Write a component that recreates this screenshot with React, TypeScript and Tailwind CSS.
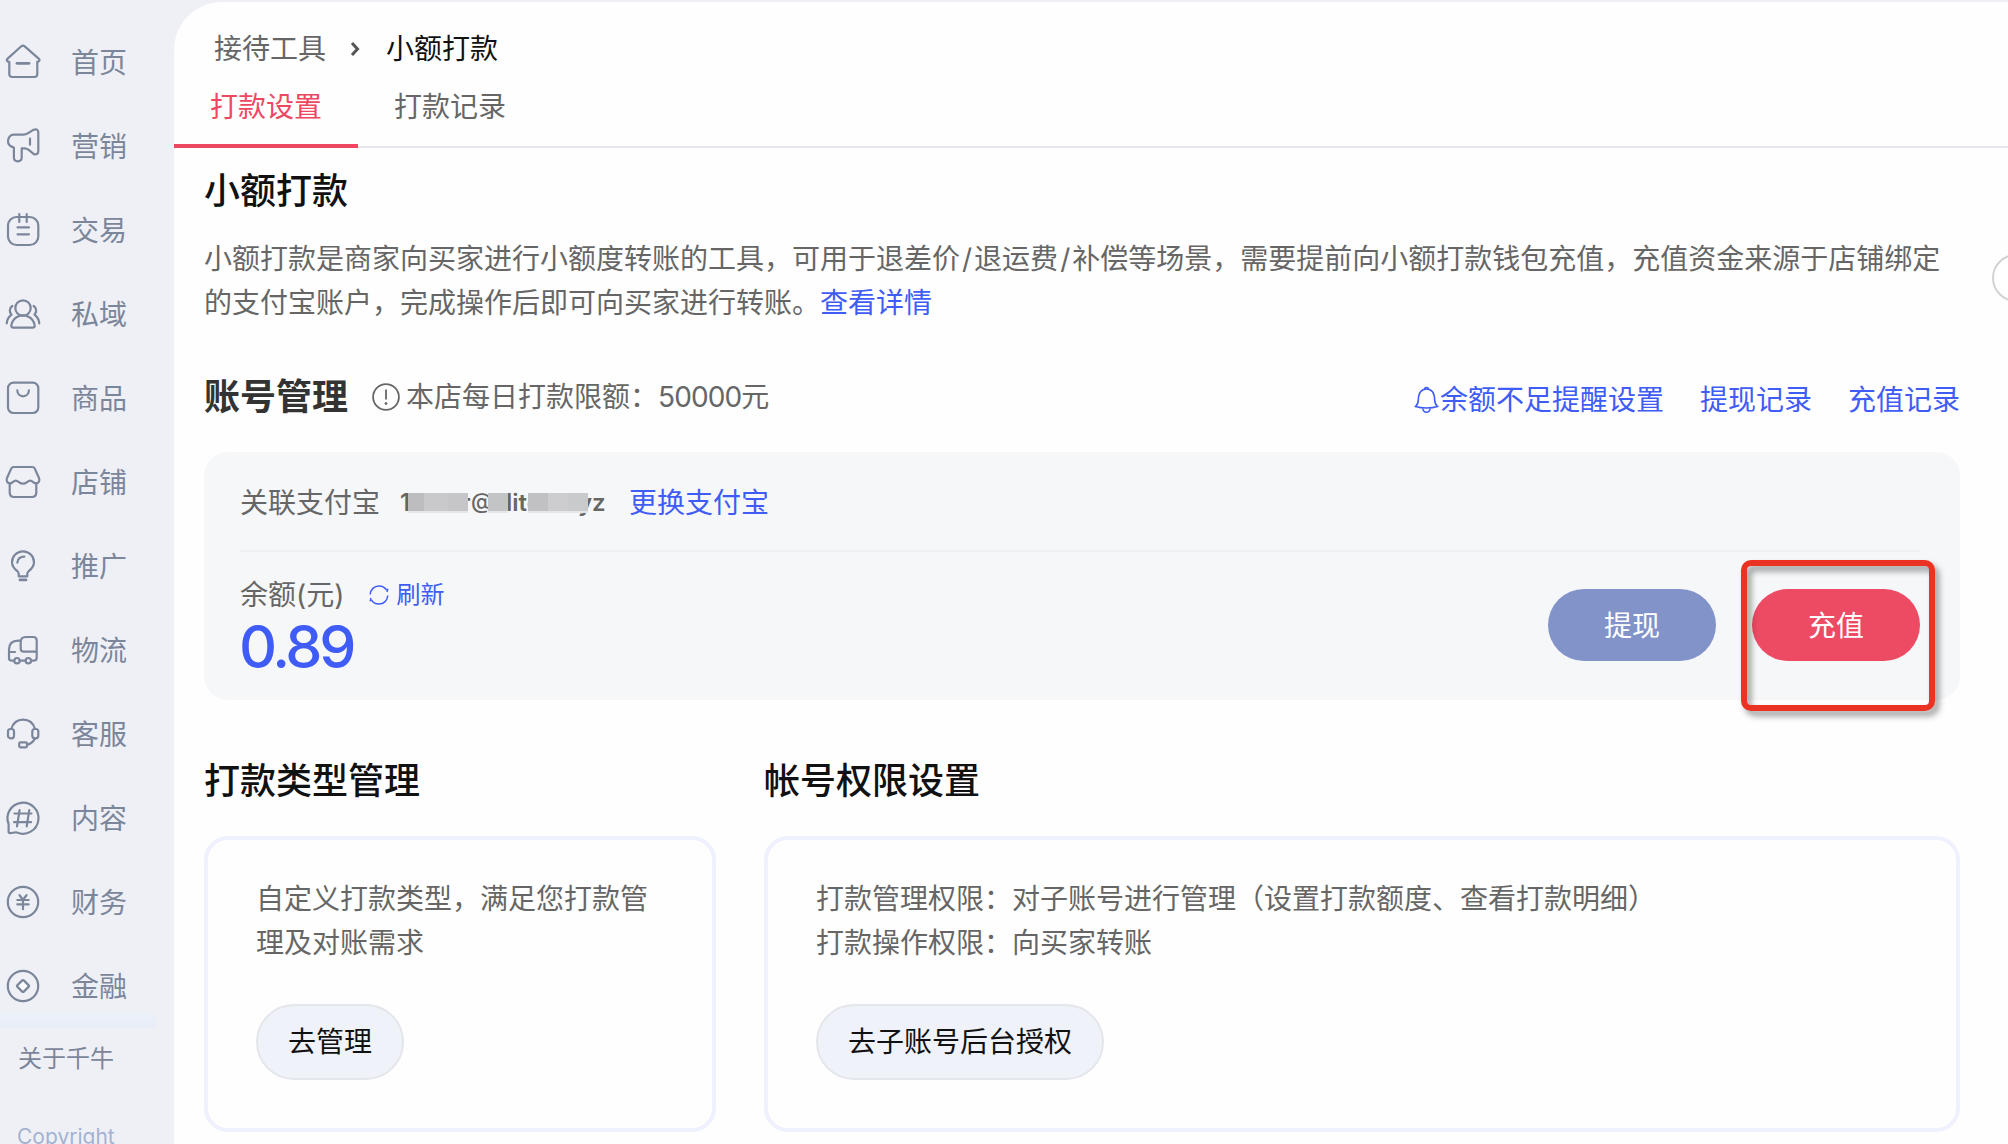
import type { ReactNode } from "react"

interface NavItem {
  label: string
  icon: ReactNode
}

const navItems: NavItem[] = [
  {
    label: "首页",
    icon: (
      <>
        <path d="M18.3 4.3 4.6 16.6c-1.600 1.500-.9 2.900 1.700 3.200V32c0 2 1 3 3 3h22c2 0 3-1 3-3V19.800c2.400-.3 3-1.700 1.400-3.200L21.700 4.300c-1.200-1-2.200-1-3.400 0Z" />
        <path d="M14 21.300h12" strokeWidth="2.800" />
      </>
    ),
  },
  {
    label: "营销",
    icon: (
      <>
        <path d="M11 8.700h9.500c1.800 0 3-.5 4.200-1.300l5.600-3.500c2.500-1.300 5-.4 5 2.300v19c0 2.800-2.500 4-5 2.500l-4.600-3.800c-1.400-1.100-2.700-1.600-4.400-1.600h-2.600v9.300c0 4.900-7.800 4.900-7.800 0v-10C7.500 20.600 5 18.500 5 15.300c0-4 2.500-6.600 6-6.600Z" />
        <path d="M27 12.700v6" />
      </>
    ),
  },
  {
    label: "交易",
    icon: (
      <>
        <rect x="5" y="7" width="30.300" height="28" rx="8.500" />
        <path d="M16.300 4v8M23.700 4v8M14.500 17.300H26M14.500 24.300H26" />
      </>
    ),
  },
  {
    label: "私域",
    icon: (
      <>
        <circle cx="20" cy="14" r="7.700" />
        <path d="M14.500 22.800C11.300 24.400 9.200 27 8.400 31c-.4 1.800.3 2.700 2 2.700h19.200c1.700 0 2.400-.9 2-2.700-.8-4-2.900-6.600-6.100-8.200-3-1.800-8-1.800-11 0Z" />
        <path d="M9.300 12C6.300 14.200 6 17.600 8.500 20.700 5.500 23 4 25.700 3.700 29.300M30.700 12c3 2.200 3.300 5.600.8 8.700 3 2.300 4.500 5 4.800 8.600" />
      </>
    ),
  },
  {
    label: "商品",
    icon: (
      <>
        <rect x="5" y="4.700" width="30.300" height="30.300" rx="5.500" />
        <path d="M14.300 12.300c0 8 11.600 8 11.600 0" />
      </>
    ),
  },
  {
    label: "店铺",
    icon: (
      <>
        <path d="M10.800 5h18.500c1.300 0 2 .5 2.500 1.600l4.300 9.700c1 2.700-.6 5-3.200 5-2.300 0-3.200-2.600-5.600-2.600-2.800 0-3.800 3-7.300 3s-4.500-3-7.300-3c-2.400 0-3.300 2.600-5.600 2.600-2.600 0-4.200-2.300-3.200-5l4.300-9.700C8.700 5.500 9.500 5 10.800 5Z" />
        <path d="M6.700 21.300v9.200c0 3 1.500 4.500 4.500 4.500h17.600c3 0 4.500-1.500 4.500-4.500v-9.200" />
      </>
    ),
  },
  {
    label: "推广",
    icon: (
      <>
        <path d="M15.700 30.300v-2.600c0-1.200-.5-1.900-1.500-2.700-3-2.200-5.200-4.700-5.200-8.700a11 11 0 0 1 22 0c0 4-2.200 6.500-5.200 8.700-1 .8-1.500 1.500-1.500 2.700v2.600Z" />
        <path d="M14.300 16.700c.4-3.600 3-6 7-6" />
        <path d="M17 33.900h6" strokeWidth="2.800" />
      </>
    ),
  },
  {
    label: "物流",
    icon: (
      <>
        <path d="M17.700 10.700h-2.400c-6 0-9.300 3-9.300 9V28c0 1.800.9 2.700 2.700 2.700h2.600M16.700 30.700h5.900M28 30.700h2.600c2 0 3.100-1 3.100-3V10.500c0-2.300-1.200-3.500-3.500-3.500h-7.500c-3.300 0-5 1.700-5 5v6.400c0 2.200 1.100 3.300 3.300 3.300h12.700M6 22h6" />
        <circle cx="14" cy="30.700" r="2.700" />
        <circle cx="25.300" cy="30.700" r="2.700" />
      </>
    ),
  },
  {
    label: "客服",
    icon: (
      <>
        <rect x="5" y="15" width="6" height="9.300" rx="2.500" />
        <rect x="29.300" y="15" width="6" height="9.300" rx="2.500" />
        <rect x="16.200" y="28.300" width="7.800" height="5" rx="1.200" />
        <path d="M8.300 15C10 9 14.200 5.700 20.100 5.700S30.300 9 32 15M32 24.300c-1.600 3.700-4.200 5.700-8 6.500" />
      </>
    ),
  },
  {
    label: "内容",
    icon: (
      <>
        <path d="M5.600 33.500V26A15.500 15.500 0 1 1 14 34.500c-2.500-.6-4.500.8-6.900.7-1 0-1.500-.6-1.500-1.700Z" />
        <path d="M16.600 12 14 28.300M26.300 12l-2.600 16.300M11.500 15.500h17M11 24.200h17" />
      </>
    ),
  },
  {
    label: "财务",
    icon: (
      <>
        <circle cx="20" cy="20" r="15.200" />
        <path d="m16.500 13.200 3.500 4.500 3.500-4.500M20 17.800v9.400M14.300 18h11.400M14.300 22.300h11.400" />
      </>
    ),
  },
  {
    label: "金融",
    icon: (
      <>
        <circle cx="20" cy="20" r="15.200" />
        <path fill="#fcfcfe" d="m19 14.600-4.500 4.500c-.7.700-.7 1.100 0 1.800l4.500 4.500c.7.700 1.300.7 2 0l4.500-4.500c.7-.7.7-1.100 0-1.800L21 14.600c-.7-.7-1.300-.7-2 0Z" />
      </>
    ),
  },
]

// Grey blocks that mask parts of the bound Alipay account
const maskBlocks = [
  "left-[8px] w-[16px] bg-[#bdbdbf]",
  "left-[24px] w-[24px] bg-[#c9c9cb]",
  "left-[48px] w-[20px] bg-[#c6c6c8]",
  "left-[88px] w-[20px] bg-[#c3c4c6]",
  "left-[128px] w-[20px] bg-[#c1c1c3]",
  "left-[148px] w-[20px] bg-[#cdcdcf]",
  "left-[168px] w-[20px] bg-[#c9cacc]",
]

function Sidebar() {
  return (
    <aside className="w-[174px] shrink-0 flex flex-col text-[#7c869b]">
      <nav className="flex flex-col pt-5">
        {navItems.map((item) => (
          <a key={item.label} className="flex items-center h-[84px] pl-[3px] gap-7">
            <svg
              viewBox="0 0 40 40"
              className="w-10 h-10 shrink-0"
              fill="none"
              stroke="currentColor"
              strokeWidth="2.200"
              strokeLinecap="round"
              strokeLinejoin="round"
            >
              {item.icon}
            </svg>
            <span className="pt-px text-[28px] leading-[40px]">{item.label}</span>
          </a>
        ))}
      </nav>
      <div className="w-[156px] h-[15px] shrink-0 -mt-[15px] bg-linear-to-b from-[#ecf0f8] to-[#e8edf8]" />
      <p className="mt-[13px] pl-[18px] text-[24px] leading-[36px]">关于千牛</p>
      <p className="mt-11 pl-[17px] text-[21px] leading-[32px] whitespace-nowrap text-[#a4b2d2]">Copyright</p>
    </aside>
  )
}

function Header() {
  return (
    <header>
      <div className="flex items-center h-10 mt-[27px] pl-10 text-[28px] leading-[40px]">
        <span className="text-[#666]">接待工具</span>
        <svg viewBox="0 0 10 16" className="w-[10px] h-4 ml-6 mr-[26px]" fill="none" stroke="#555" strokeWidth="3">
          <path d="m2 2 5.500 6L2 14" />
        </svg>
        <span className="text-[#111]">小额打款</span>
      </div>
      <div className="flex h-[60px] mt-[19px] text-[28px] leading-[38px] shadow-[inset_0_-2px_0_#e5e7ee]">
        <a className="w-[184px] text-center text-[#ed4862] border-b-4 border-[#ed4862]">打款设置</a>
        <a className="w-[184px] text-center text-[#666]">打款记录</a>
      </div>
    </header>
  )
}

function AccountCard() {
  return (
    <div className="h-[248px] mt-[31px] pl-9 pr-10 rounded-3xl bg-[#f6f7f9]">
      <div className="flex items-center h-[100px] pt-1 border-b-2 border-[#eff0f3] text-[28px]">
        <span className="w-40 text-[#666]">关联支付宝</span>
        <span className="relative w-[229px] text-[24px] font-semibold text-[#666] whitespace-nowrap">
          1
          <span className="absolute left-[61px]">r</span>
          <span className="absolute left-[71px] text-[22px] font-medium">@</span>
          <span className="absolute left-[106px]">lito</span>
          <span className="absolute left-[178px]">yz</span>
          {maskBlocks.map((block) => (
            <span key={block} className={`absolute top-[8px] h-[18px] shadow-[0_2px_0_#e6e6e8] ${block}`} />
          ))}
        </span>
        <a className="text-[#3f5cf6]">更换支付宝</a>
      </div>
      <div className="flex justify-between">
        <div>
          <div className="flex items-center h-10 mt-[23px]">
            <span className="text-[28px] text-[#666]">余额(元)</span>
            <a className="flex items-center gap-[7px] ml-[25px] text-[24px] text-[#3f5cf6]">
              <svg viewBox="0 0 20 20" className="w-5 h-5" fill="none" stroke="currentColor" strokeWidth="1.500">
                <path d="M1.200 9.500C1.500 4.500 5.200 1 10 1c3.300 0 6 1.500 7.600 4.200M18.800 10.500c-.3 5-4 8.500-8.800 8.500-3.300 0-6-1.500-7.600-4.200" />
                <path d="M18.800 3.800 18 7M1.200 16.200 2 13" />
              </svg>
              刷新
            </a>
          </div>
          <p className="mt-0.5 -ml-px text-[59px] leading-[60px] font-medium tracking-[-3.300px] text-[#3f5cf6]">0.89</p>
        </div>
        <div className="relative flex gap-9 mt-[37px] h-[72px] text-[28px] text-white">
          <button className="w-[168px] pt-0.5 rounded-full bg-[#8193c9]">提现</button>
          <button className="w-[168px] pt-0.5 rounded-full bg-[#ed4a64]">充值</button>
          <div className="absolute left-[193px] -top-[29px] w-[194px] h-[151px] rounded-[10px] border-6 border-[#eb3323] drop-shadow-[4px_5px_3px_rgba(0,0,0,0.4)]" />
        </div>
      </div>
    </div>
  )
}

interface PanelProps {
  title: string
  lines: string[]
  action: string
  width: string
}

function Panel({ title, lines, action, width }: PanelProps) {
  return (
    <section className={width}>
      <h2 className="text-[36px] leading-[48px] font-medium text-[#111]">{title}</h2>
      <div className="h-[296px] mt-[31px] px-12 pt-[37px] rounded-3xl border-4 border-[#f0f1fe]">
        {lines.map((line) => (
          <p key={line} className="text-[28px] leading-[44px] text-[#666] whitespace-nowrap">
            {line}
          </p>
        ))}
        <button className="h-[76px] mt-[39px] px-[30px] rounded-full border-2 border-[#e4e6ec] bg-[#eff2f9] text-[28px] text-[#111]">
          {action}
        </button>
      </div>
    </section>
  )
}

export default function App() {
  return (
    <div className="relative flex w-[2008px] h-[1144px] overflow-hidden bg-[#eef0f6] font-['Inter','Noto_Sans_CJK_SC',sans-serif]">
      <Sidebar />
      <main className="flex-1 mt-0.5 rounded-tl-[48px] bg-[#fefefe]">
        <Header />
        <div className="w-[1786px] pl-[30px]">
          <h1 className="mt-[19px] text-[36px] leading-[48px] font-medium text-[#111]">小额打款</h1>
          <p className="mt-[22px] text-[28px] leading-[44px] text-[#666] whitespace-nowrap">
            小额打款是商家向买家进行小额度转账的工具，可用于退差价<span className="px-0.5">/</span>退运费
            <span className="px-0.5">/</span>补偿等场景，需要提前向小额打款钱包充值，充值资金来源于店铺绑定
            <br />
            的支付宝账户，完成操作后即可向买家进行转账。
            <a className="text-[#3f5cf6]">查看详情</a>
          </p>
          <div className="flex items-center h-12 mt-12 text-[28px]">
            <h2 className="text-[36px] leading-[48px] font-bold text-[#333]">账号管理</h2>
            <svg viewBox="0 0 28 28" className="w-7 h-7 ml-6 mr-[6px]" fill="none" stroke="#666" strokeWidth="1.800">
              <circle cx="14" cy="14" r="12.900" />
              <path d="M14 6.500v10" />
              <circle cx="14" cy="20.500" r="1" fill="#666" strokeWidth="1" />
            </svg>
            <span className="text-[#666]">
              本店每日打款限额：<span className="tracking-[-0.900px]">50000</span>元
            </span>
            <div className="flex items-center gap-9 ml-auto mt-[5px] text-[#3f5cf6]">
              <a className="flex items-center">
                <svg viewBox="0 0 26 28" className="w-[26px] h-7" fill="none" stroke="currentColor" strokeWidth="1.600">
                  <path d="M1.500 20.500c2-1.600 2.700-3.500 2.800-6.500.2-7 2.700-11 8.200-11s8 4 8.200 11c.1 3 .8 4.900 2.800 6.500-6 2-16 2-22 0Z" />
                  <path d="M8.800 22.500c.7 5 6.700 5 7.400 0M10.500 3c.3-2 3.700-2 4 0" />
                </svg>
                余额不足提醒设置
              </a>
              <a>提现记录</a>
              <a>充值记录</a>
            </div>
          </div>
          <AccountCard />
          <div className="flex gap-12 mt-[57px]">
            <Panel
              width="w-[512px]"
              title="打款类型管理"
              lines={["自定义打款类型，满足您打款管", "理及对账需求"]}
              action="去管理"
            />
            <Panel
              width="flex-1"
              title="帐号权限设置"
              lines={["打款管理权限：对子账号进行管理（设置打款额度、查看打款明细）", "打款操作权限：向买家转账"]}
              action="去子账号后台授权"
            />
          </div>
        </div>
      </main>
      {/* floating handle, cut off by the window edge */}
      <div className="absolute left-[1992px] top-[254px] w-12 h-12 rounded-full border-2 border-[#d2d2d2] bg-white" />
    </div>
  )
}
